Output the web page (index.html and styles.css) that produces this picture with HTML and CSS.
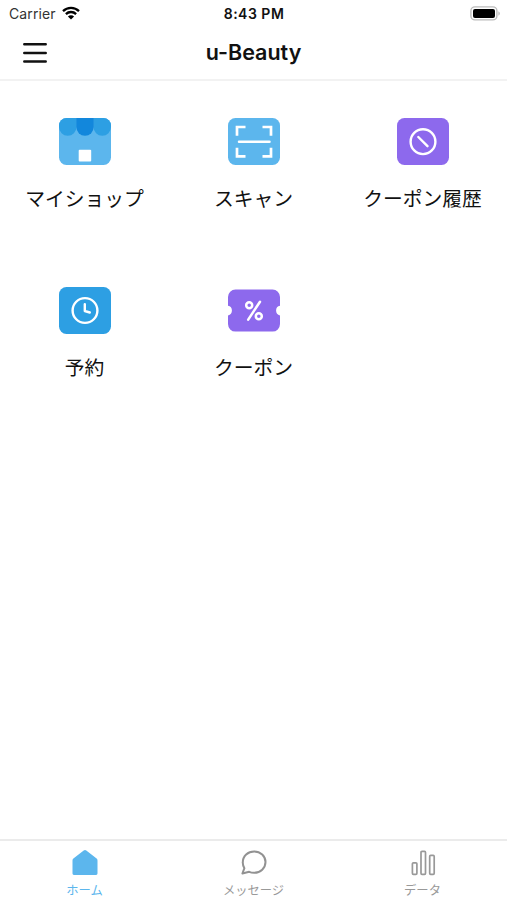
FILE: index.html
```html
<!DOCTYPE html>
<html lang="ja">
<head>
<meta charset="UTF-8">
<title>u-Beauty</title>
<link rel="stylesheet" href="styles.css">
</head>
<body>

<div class="app">

	<div class="status">
		<div class="carrier">
			<span>Carrier</span>
			<svg class="wifi" width="18" height="14" viewBox="0 0 18 14">
				<path d="M1 5.2a11.5 11.5 0 0 1 16 0M3.9 8.1a7.3 7.3 0 0 1 10.2 0" fill="none" stroke="#000" stroke-width="2.3"/>
				<path d="M9 13.6L5.9 10.5a4.4 4.4 0 0 1 6.2 0z"/>
			</svg>
		</div>
		<div class="time">8:43 PM</div>
		<div class="battery">
			<svg width="31" height="15" viewBox="0 0 31 15">
				<rect x="0.9" y="0.9" width="26" height="13" rx="4" fill="#fff" stroke="#bcbcbc" stroke-width="1.4"/>
				<rect x="3" y="3" width="22" height="9" rx="2"/>
				<path d="M28.5 5.2q2.4 2.2 0 4.6z" fill="#aaa"/>
			</svg>
		</div>
	</div>

	<div class="header">
		<button class="menu" type="button" aria-label="メニュー">
			<svg width="24" height="22" viewBox="0 0 24 22">
				<path d="M1.3 2.3h21.4M1.3 10.9h21.4M1.3 19.4h21.4" stroke="#111" stroke-width="2.5" stroke-linecap="round"/>
			</svg>
		</button>
		<h1 class="title">u-Beauty</h1>
	</div>

	<div class="grid">
		<div class="item">
			<svg width="52" height="47" viewBox="0 0 52 47">
				<clipPath id="shop"><rect width="52" height="47" rx="7.5"/></clipPath>
				<g clip-path="url(#shop)">
					<rect width="52" height="47" fill="#5cb6ed"/>
					<path d="M0 0h17.5v9a8.75 8.75 0 0 1-17.5 0zM34.5 0H52v9a8.75 8.75 0 0 1-17.5 0z" fill="#2d9fe3"/>
					<path d="M17.3 0h17.4v9a8.7 8.7 0 0 1-17.4 0z" fill="#1287dc"/>
				</g>
				<rect x="19.7" y="31.7" width="12.5" height="11.8" rx="1" fill="#fff"/>
			</svg>
			<div class="label">マイショップ</div>
		</div>
		<div class="item">
			<svg width="52" height="47" viewBox="0 0 52 47">
				<rect width="52" height="47" rx="7.5" fill="#5cb6ed"/>
				<path d="M17.5 9H9v8.8M34.5 9H43v8.8M17.5 38.3H9v-8.5M34.5 38.3H43v-8.5" fill="none" stroke="#fff" stroke-width="2.7"/>
				<path d="M11 23.7h30.5" stroke="#fff" stroke-width="2.5" stroke-linecap="round"/>
			</svg>
			<div class="label">スキャン</div>
		</div>
		<div class="item">
			<svg width="52" height="47" viewBox="0 0 52 47">
				<rect width="52" height="47" rx="7.5" fill="#8d69ed"/>
				<circle cx="26" cy="23.7" r="12.4" fill="none" stroke="#fff" stroke-width="2.4"/>
				<path d="M21.3 19L30.5 28.2" stroke="#fff" stroke-width="2.4" stroke-linecap="round"/>
			</svg>
			<div class="label">クーポン履歴</div>
		</div>
		<div class="item">
			<svg width="52" height="47" viewBox="0 0 52 47">
				<rect width="52" height="47" rx="7.5" fill="#2d9fe3"/>
				<circle cx="26" cy="23.5" r="12.4" fill="none" stroke="#fff" stroke-width="2.4"/>
				<path d="M25.8 17.3v6.7l5 1.5" fill="none" stroke="#fff" stroke-width="2.4" stroke-linecap="round" stroke-linejoin="round"/>
			</svg>
			<div class="label">予約</div>
		</div>
		<div class="item">
			<svg width="52" height="47" viewBox="0 0 52 47">
				<path d="M7.5 2.6h37a7.5 7.5 0 0 1 7.5 7.5v8.7a4.9 4.9 0 0 0 0 9.6v8.7a7.5 7.5 0 0 1-7.5 7.5h-37a7.5 7.5 0 0 1-7.5-7.5v-8.7a4.9 4.9 0 0 0 0-9.6v-8.7a7.5 7.5 0 0 1 7.5-7.5z" fill="#8d69ed"/>
				<g fill="none" stroke="#fff" stroke-width="2.5">
					<circle cx="21.2" cy="18.3" r="3"/>
					<circle cx="30.8" cy="29.3" r="3"/>
					<path d="M32 14.8L20.2 32.6" stroke-linecap="round"/>
				</g>
			</svg>
			<div class="label">クーポン</div>
		</div>
	</div>

	<div class="tabs">
		<div class="tab active">
			<svg width="28" height="28" viewBox="0 0 28 28">
				<path d="M12.7 1.5q1.3-1 2.6 0L25.6 9.6q.9.7.9 1.8v13.2q0 1.4-1.4 1.4H2.9q-1.4 0-1.4-1.4V11.4q0-1.1.9-1.8z" fill="#5cb6ed"/>
			</svg>
			<div>ホーム</div>
		</div>
		<div class="tab">
			<svg width="28" height="28" viewBox="0 0 28 28">
				<path d="M2.4 24.5l2-5.3a10.3 10.3 0 0 1-1.6-5.8C2.8 7 7.9 2.5 14.2 2.5s11.3 4.7 11.3 10.6-5 10.7-11.3 10.7c-1.9 0-3.5-.3-5-1z" fill="none" stroke="#929292" stroke-width="2" stroke-linejoin="round"/>
			</svg>
			<div>メッセージ</div>
		</div>
		<div class="tab">
			<svg width="28" height="28" viewBox="0 0 28 28">
				<g fill="none" stroke="#999" stroke-width="1.7">
					<rect x="3.4" y="13.8" width="4.5" height="11.5" rx="1"/>
					<rect x="12" y="2.4" width="4.5" height="22.9" rx="1"/>
					<rect x="20.7" y="6.4" width="4.5" height="18.9" rx="1"/>
				</g>
			</svg>
			<div>データ</div>
		</div>
	</div>

</div>

</body>
</html>
```
FILE: styles.css
```css
body {
	margin: 0;
	background: #fff;
	color: #111;
	font-family: Inter, "Noto Sans CJK JP", sans-serif;
}

.app {
	display: flex;
	flex-direction: column;
	height: 900px;
}

svg {
	display: block;
}

/* status bar */
.status {
	display: grid;
	grid-template-columns: 1fr auto 1fr;
	align-items: center;
	height: 27px;
	padding: 0 6px 0 7px;
	font-size: 14px;
}

.carrier {
	display: flex;
	align-items: center;
	gap: 6px;
	padding-left: 2px;
	color: #333;
	letter-spacing: 0.1px;
}

.wifi {
	margin-bottom: 2px;
}

.time {
	font-weight: 600;
	letter-spacing: 0.5px;
}

.battery {
	display: flex;
	justify-content: flex-end;
}

/* title bar */
.header {
	display: grid;
	grid-template-columns: 80px 1fr 80px;
	align-items: center;
	height: 52px;
	border-bottom: 2px solid #f2f2f2;
}

.menu {
	border: 0;
	padding: 0;
	margin-left: 23px;
	background: none;
}

.title {
	margin: 0;
	padding-bottom: 2px;
	font-size: 21.5px;
	font-weight: 600;
	text-align: center;
}

/* menu icons */
.grid {
	display: grid;
	grid-template-columns: repeat(3, 1fr);
	grid-auto-rows: 168.7px;
	flex: 1;
}

.item {
	display: flex;
	flex-direction: column;
	align-items: center;
	padding-top: 37px;
}

.label {
	margin-top: 19px;
	font-size: 19.8px;
	line-height: 30px;
}

/* bottom tabs */
.tabs {
	display: grid;
	grid-template-columns: repeat(3, 1fr);
	height: 59px;
	border-top: 2px solid #ebebeb;
}

.tab {
	display: flex;
	flex-direction: column;
	align-items: center;
	gap: 1px;
	padding-top: 8px;
	color: #999;
	font-size: 12.3px;
	line-height: 25px;
}

.active {
	color: #5cb6ed;
}
```
